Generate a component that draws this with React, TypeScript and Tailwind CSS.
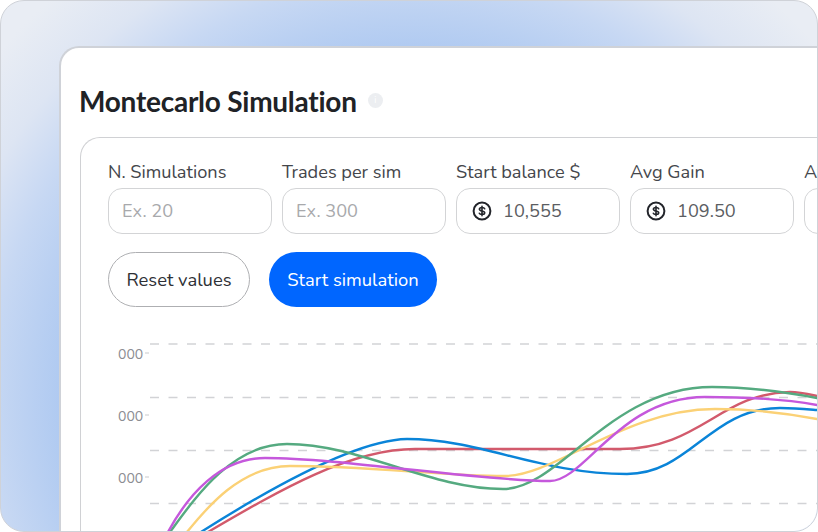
const ORIGIN_X = 108;
const ORIGIN_Y = 330;

const curves: { color: string; d: string }[] = [
  { color: "#d25a6c", d: "M208 532C280 490 350 449 415 449H620C700 449 720 393 790 392C800 392 808 394 817 396" },
  { color: "#0a84d8", d: "M201 532C280 482 360 440 407 439C480 439 540 474 627 474C690 474 710 408 780 408C795 408 805 409 817 410" },
  { color: "#fbd176", d: "M187 532C205 510 240 466 290 466C370 466 440 476 505 476C555 476 625 409 715 409C750 409 785 413 817 419" },
  { color: "#55aa80", d: "M170 532C195 498 232 444 287 444C360 444 430 489 503 489C560 489 610 387 712 387C750 387 785 392 817 398" },
  { color: "#c558dc", d: "M168 532C188 495 220 458 265 458C340 458 480 481 550 481C585 481 620 397 705 397C740 397 785 399 817 405" },
];

function Coin() {
  return (
    <svg width="20" height="20" viewBox="0 0 20 20" fill="none" className="shrink-0">
      <circle cx="10" cy="10" r="8.4" stroke="#23252b" strokeWidth="2" />
      <path d="M12.7 7.7C12.4 6.9 11.5 6.5 10 6.5C8.3 6.5 7.4 7.2 7.4 8.2C7.4 10.6 12.7 9.4 12.7 11.8C12.7 12.8 11.7 13.5 10 13.5C8.5 13.5 7.6 13.1 7.3 12.3M10 5.2V14.8" stroke="#23252b" strokeWidth="1.6" strokeLinecap="round" />
    </svg>
  );
}

function Field({ label, value, placeholder, coin }: { label: string; value?: string; placeholder?: string; coin?: boolean }) {
  return (
    <div className="w-[164px] shrink-0">
      <div className="h-[24px] whitespace-nowrap text-[18.2px] leading-[27px] text-[#44464b]">{label}</div>
      <div className={`mt-[5px] flex h-[46px] items-center gap-[11px] rounded-[14px] border border-[#d3d4d6] ${coin ? "pl-[15px]" : "pl-[13px]"}`}>
        {coin && <Coin />}
        <span className={`pt-[2px] text-[18.2px] ${value ? "text-[#5b5d62]" : "text-[#a8a9ac]"}`}>{value ?? placeholder}</span>
      </div>
    </div>
  );
}

export default function App() {
  return (
    <div className="h-[532px] w-[818px] overflow-hidden rounded-[24px] border border-[#cfd2d8] bg-[radial-gradient(circle_540px_at_410px_400px,#8db3ef_0%,#aec9f1_64%,#c7d8f3_78%,#dde5f3_88%,#e9edf4_100%)] pl-[58px] pt-[45px] font-['Nunito','Noto_Sans',sans-serif]">
      <div className="h-[560px] w-[800px] rounded-tl-[20px] border-l-2 border-t-2 border-[#cfd2d8] bg-white pl-[19px]">
        <div className="flex h-[89px] items-center gap-[11px] pt-[16px]">
          <h1 className="-ml-[1px] font-['Lato',sans-serif] text-[28px] font-bold leading-[36px] tracking-[-0.25px] text-[#202226]">Montecarlo Simulation</h1>
          <span className="flex h-[15px] w-[15px] items-center justify-center rounded-full bg-[#eceef1] text-[9px] leading-none text-white">i</span>
        </div>
        <div className="h-[420px] w-[760px] rounded-tl-[20px] border-l border-t border-[#d0d1d4] pl-[27px] pt-[21px]">
          <div className="flex gap-[10px]">
            <Field label="N. Simulations" placeholder="Ex. 20" />
            <Field label="Trades per sim" placeholder="Ex. 300" />
            <Field label="Start balance $" value="10,555" coin />
            <Field label="Avg Gain" value="109.50" coin />
            <Field label="Avg Loss" placeholder=" " />
          </div>
          <div className="mt-[18px] flex gap-[19px]">
            <button className="h-[55px] w-[142px] rounded-full border border-[#aeafb2] bg-white pt-[1px] text-[18.4px] text-[#2e3035]">Reset values</button>
            <button className="h-[55px] w-[168px] rounded-full bg-[#0066ff] pt-[1px] text-[18.4px] text-white">Start simulation</button>
          </div>
          <svg width="710" height="202" viewBox={`${ORIGIN_X} ${ORIGIN_Y} 710 202`} className="mt-[23px] block" fill="none">
            {[344, 397.5, 450.5, 503.5].map((y) => (
              <line key={y} x1="150" x2="818" y1={y} y2={y} stroke="#d2d3d6" strokeWidth="1.5" strokeDasharray="9 9.5" />
            ))}
            {[353, 415, 477].map((y) => (
              <g key={y}>
                <text x="118" y={y + 5.5} fontSize="14" fill="#8b8d92">000</text>
                <line x1="145" x2="149" y1={y} y2={y} stroke="#c9cacd" strokeWidth="1" />
              </g>
            ))}
            {curves.map((c) => (
              <path key={c.color} d={c.d} stroke={c.color} strokeWidth="2.4" strokeLinecap="round" />
            ))}
          </svg>
        </div>
      </div>
    </div>
  );
}
